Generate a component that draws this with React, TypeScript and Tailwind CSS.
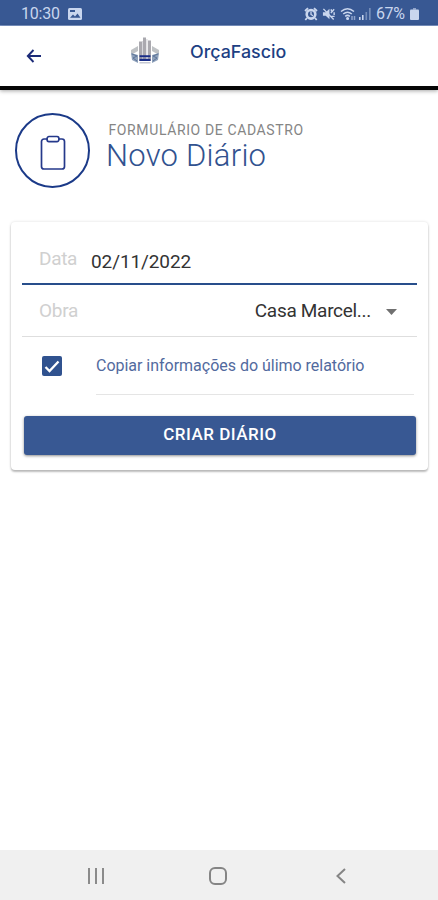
import type { ReactNode } from "react";

function StatusBar() {
  return (
    <div className="flex h-[26px] items-center border-b border-[#7d97c8] bg-[#385893] pt-[3px] text-[#c9d6ee]">
      <span className="ml-[21px] w-[47px] text-[16px] leading-none tracking-[-0.2px]">10:30</span>
      <svg className="h-3 w-[14px]" viewBox="0 0 14 12">
        <rect width="14" height="12" rx="1.5" fill="currentColor" />
        <path d="M2 9.8 5 6.5l2 2 2.5-3 3 4.3ZM2 2h5v2H2Z" fill="#385893" />
      </svg>
      <div className="ml-auto mr-[19px] flex items-center">
        <svg className="h-[14px] w-[14px]" viewBox="0 0 14 14" fill="none" stroke="currentColor">
          <circle cx="7" cy="7.3" r="4.3" strokeWidth="2.6" />
          <path d="M7 4.5v3l2 1.3" strokeWidth="1.3" />
          <path d="M1 4 4 1.2M13 4l-3-2.8M3 11l-1.7 2M11 11l1.7 2" strokeWidth="1.8" />
        </svg>
        <svg className="ml-[4px] h-[14px] w-[14px]" viewBox="0 0 15 14" fill="currentColor">
          <path d="M1 5h3l4-3.5v11L4 9H1Z" />
          <path d="m1.5 1.5 11 11.5M9.5 6 13 2M10 9.5h3.5M10 4V2M13 5v3" fill="none" stroke="currentColor" strokeWidth="1.5" />
        </svg>
        <svg className="ml-[4px] h-[14px] w-[16px]" viewBox="0 0 16 14" fill="none" stroke="currentColor" strokeWidth="1.5">
          <path d="M1 4.5C5 1 10 1 14 4.5M3.2 7c2.8-2.3 5.8-2.3 8.6 0M5.2 9.3c1.5-1.2 3.2-1.2 4.7 0" />
          <circle cx="7.6" cy="11.5" r=".8" fill="currentColor" />
          <path d="M12 9v4M14.5 9v4" opacity=".6" />
        </svg>
        <svg className="ml-[3px] h-3 w-[13px]" viewBox="0 0 13 12" fill="currentColor">
          <path d="M0 9h1.6v3H0ZM3 7h1.6v5H3Z" />
          <path d="M6.5 4h1.6v8H6.5ZM10 0h1.7v12H10Z" opacity=".42" />
        </svg>
        <span className="ml-[4px] w-[31px] text-[16px] leading-none tracking-[-0.4px]">67%</span>
        <svg className="ml-[3px] h-3 w-[9px]" viewBox="0 0 9 12" fill="currentColor">
          <path d="M3 0h3v1.7H3Z" opacity=".6" />
          <rect y="1.5" width="9" height="10.5" rx="1" />
        </svg>
      </div>
    </div>
  );
}

function Header() {
  return (
    <header className="flex h-[64px] items-start border-b-[4px] border-[#060606] bg-white shadow-[0_1px_4px_rgba(0,0,0,0.35)]">
      <svg className="ml-[26px] mt-[23px] h-[14px] w-4" viewBox="0 0 16 14" fill="none" stroke="#1c2b78" strokeWidth="1.9">
        <path d="M15 7H2M7.5 1 1.8 7l5.7 6" />
      </svg>
      <svg className="ml-[88px] mt-[10px] h-[29px] w-[30px]" viewBox="0 0 30 29">
        <path d="M9 5.5h3V25H9ZM13 1.5h3V25h-3ZM18 4.5h3V25h-3Z" fill="#aaa9af" />
        <path d="M12 5h1v20h-1ZM16.3 3h1.2v22h-1.2Z" fill="#d7d7dc" />
        <path d="m1 14 7-4v5l-7 4ZM22 10l7 4v5l-7-4Z" fill="#bfc2c5" />
        <path d="m1 17 7 2v8l-6-3ZM29 17l-7 2v8l6-3Z" fill="#8ea1bb" />
        <path d="m2 18 5 2-4 2 4 3M28 18l-5 2 4 2-4 3" fill="none" stroke="#5c7499" />
        <path d="M9.5 19.2h11v2h-11ZM9.5 22.8h11v2.2h-11Z" fill="#192d88" />
        <path d="M9.5 26h11v1.5h-11Z" fill="#c5c8d2" />
      </svg>
      <span className="ml-[30px] mt-[16px] inline-block origin-left scale-x-[1.05] whitespace-nowrap font-[Inter,sans-serif] text-[17px] font-medium leading-[20px] text-[#1d3f83]">
        OrçaFascio
      </span>
    </header>
  );
}

function FormRow({ children, className }: { children: ReactNode; className: string }) {
  return <div className={`mx-[11px] flex items-center ${className}`}>{children}</div>;
}

export default function App() {
  return (
    <div className="flex h-[900px] w-[438px] flex-col overflow-hidden bg-white font-[Roboto,sans-serif]">
      <StatusBar />
      <Header />
      <main className="flex-1">
        <section className="flex pl-[15px] pt-[23px]">
          <div className="flex h-[75px] w-[75px] items-center justify-center rounded-full border-[2.5px] border-[#1b3a88]">
            <svg className="mt-[4px] h-[35px] w-[26px]" viewBox="0 0 26 35" fill="none" stroke="#25398b" strokeWidth="1.7">
              <path d="M7.5 4H4a2.5 2.5 0 0 0-2.5 2.5v25A2.5 2.5 0 0 0 4 34h18a2.5 2.5 0 0 0 2.5-2.5v-25A2.5 2.5 0 0 0 22 4h-3.5" />
              <path d="M9 1.5h8c1 0 2 1 2 2.5s-1 2.7-2 2.7H9C8 6.7 7 5.5 7 4s1-2.5 2-2.5Z" />
            </svg>
          </div>
          <div className="ml-[16px] mt-[9px]">
            <p className="ml-[2.5px] whitespace-nowrap text-[14px] leading-4 tracking-[0.62px] text-[#858585]">FORMULÁRIO DE CADASTRO</p>
            <h1 className="whitespace-nowrap text-[31px] font-light leading-[35px] tracking-[0.25px] text-[#31528f]">Novo Diário</h1>
          </div>
        </section>

        <section className="ml-[11px] mr-[10px] mt-[34px] h-[248px] rounded bg-white shadow-[0_2px_2px_rgba(0,0,0,0.24),0_0_3px_rgba(0,0,0,0.14)]">
          <FormRow className="h-[63px] border-b-2 border-[#284e8b] pl-[17px] pt-[19px] text-[19px]">
            <span className="mb-[5px] w-[52px] tracking-[-0.3px] text-[#d0d0d0]">Data</span>
            <span className="tracking-[-0.1px] text-[#333]">02/11/2022</span>
          </FormRow>
          <FormRow className="h-[52px] border-b border-[#dedede] pl-[17px] text-[19px]">
            <span className="mt-px tracking-[-0.3px] text-[#d0d0d0]">Obra</span>
            <span className="ml-auto mr-[15px] mt-px tracking-[-0.3px] text-[#333]">Casa Marcel...</span>
            <svg className="mr-[20px] mt-[2px] h-[6px] w-[11px]" viewBox="0 0 11 6">
              <path d="M0 0h11L5.5 6Z" fill="#707070" />
            </svg>
          </FormRow>
          <FormRow className="h-[58px] pl-[20px]">
            <span className="flex h-5 w-5 items-center justify-center rounded-[2px] bg-[#30528f]">
              <svg className="h-[13px] w-4" viewBox="0 0 16 13" fill="none" stroke="white" strokeWidth="2.3">
                <path d="m1.5 7 4 4L14.5 1.5" />
              </svg>
            </span>
            <span className="ml-[34px] mr-[3px] flex h-full flex-1 items-center whitespace-nowrap border-b border-[#e5e5e5] text-[16px] tracking-[-0.02px] text-[#526a9e]">
              Copiar informações do úlimo relatório
            </span>
          </FormRow>
          <button className="ml-[13px] mt-[21px] flex h-[39px] w-[392px] items-center justify-center rounded-[3px] bg-[#385893] pb-px text-[17px] font-medium tracking-[0.5px] text-white shadow-[0_1px_3px_rgba(0,0,0,0.45)]">
            CRIAR DIÁRIO
          </button>
        </section>
      </main>
      <nav className="flex h-[50px] items-center bg-[#f0f0f0]">
        <svg className="ml-[88px] mt-px h-4 w-4" viewBox="0 0 16 16" fill="#8b8b8b">
          <path d="M0 0h2v16H0ZM7 0h2v16H7ZM14 0h2v16h-2Z" />
        </svg>
        <span className="ml-[105px] mt-px h-[18px] w-[18px] rounded-[6px] border-2 border-[#858585]" />
        <svg className="ml-[109px] mt-px h-4 w-[10px]" viewBox="0 0 10 16" fill="none" stroke="#858585" strokeWidth="2">
          <path d="M9 1 1.5 8 9 15" />
        </svg>
      </nav>
    </div>
  );
}
